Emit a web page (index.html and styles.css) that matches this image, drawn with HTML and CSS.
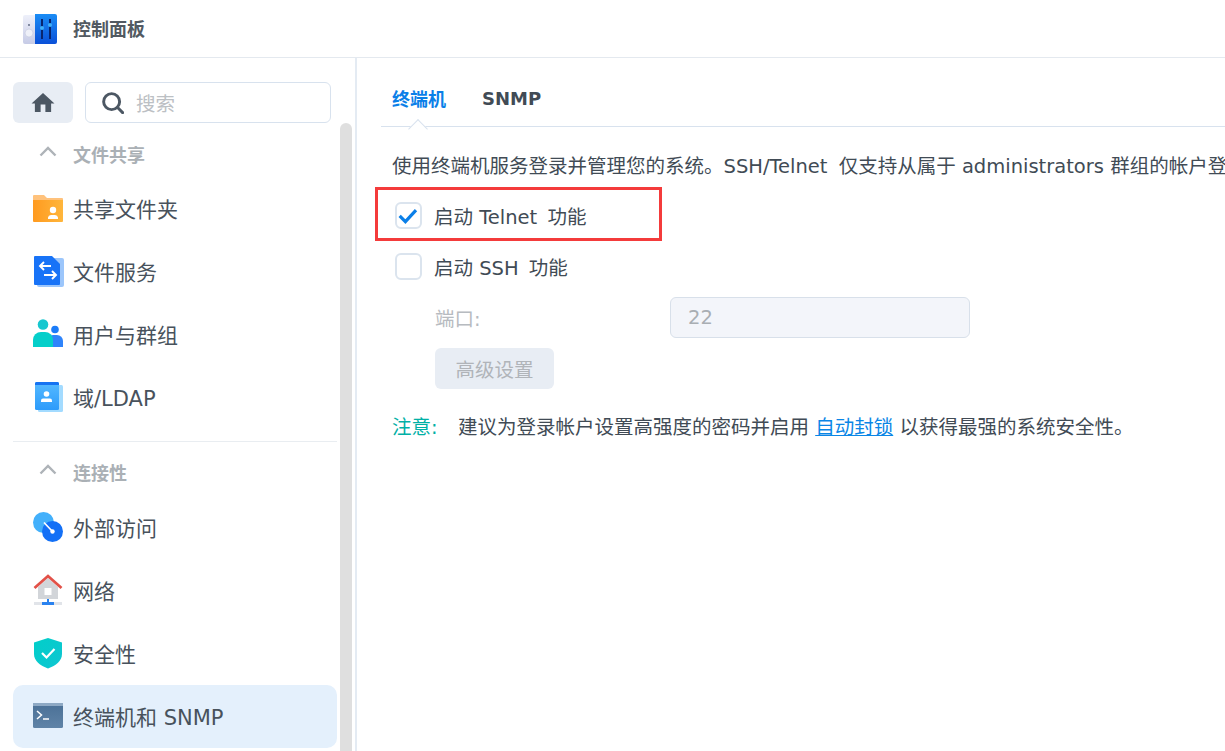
FILE: index.html
```html
<!DOCTYPE html>
<html lang="zh-CN">
<head>
<meta charset="utf-8">
<title>控制面板</title>
<link rel="stylesheet" href="styles.css">
</head>
<body>
<div class="window">
  <header class="titlebar">
    <svg class="app-icon" viewBox="0 0 34 32" aria-hidden="true">
      <defs>
        <linearGradient id="appL" x1="0" y1="0" x2="0" y2="1"><stop offset="0" stop-color="#eef0fa"/><stop offset="1" stop-color="#c6cbe6"/></linearGradient>
        <linearGradient id="appR" x1="0" y1="0" x2="0" y2="1"><stop offset="0" stop-color="#1a8cf5"/><stop offset="1" stop-color="#0a50d8"/></linearGradient>
      </defs>
      <rect x="0" y="2" width="14" height="29" rx="2" fill="url(#appL)"/>
      <circle cx="6" cy="12" r=".9" fill="#55607a"/>
      <circle cx="6" cy="20" r="4" fill="#eef0f8" stroke="#c3c8de" stroke-width=".6"/>
      <path d="M12 1h20a2 2 0 0 1 2 2v26a2 2 0 0 1-2 2H12z" fill="url(#appR)"/>
      <path d="M19 6v20M27 6v20" stroke="#08256e" stroke-width="2"/>
      <circle cx="19" cy="15" r="2" fill="#3fb0f8"/>
      <circle cx="27" cy="12" r="2" fill="#3fb0f8"/>
    </svg>
    <span class="app-title">控制面板</span>
  </header>
  <div class="main">
    <aside class="sidebar">
      <div class="search-row">
        <button class="home-btn" type="button" aria-label="主页">
          <svg viewBox="0 0 24 22" class="home-icon" aria-hidden="true"><path d="M12 1 0 12h3.500v9h17v-9H24zM9.500 13h5v8h-5z" fill="#4c5763" fill-rule="evenodd"/></svg>
        </button>
        <div class="search-box">
          <svg viewBox="0 0 24 24" class="search-icon" aria-hidden="true"><circle cx="10.500" cy="10.500" r="8.700" fill="none" stroke="#4c5763" stroke-width="3.200"/><path d="m17 17 5.500 5.500" stroke="#4c5763" stroke-width="3.200" stroke-linecap="round"/></svg>
          <span class="search-text">搜索</span>
        </div>
      </div>
      <div class="nav-wrap">
        <nav class="nav">
          <div class="nav-head"><svg viewBox="0 0 18 11" class="chev" aria-hidden="true"><path d="m1.500 9.500 7.500-7.500 7.500 7.500" fill="none" stroke="#aeb3b8" stroke-width="2.400"/></svg><span>文件共享</span></div>
          <div class="nav-item">
            <svg class="nav-icon" viewBox="0 0 32 32" aria-hidden="true"><defs><linearGradient id="fold" x1="0" y1="0" x2="1" y2="0"><stop offset="0" stop-color="#ff9a1f"/><stop offset="1" stop-color="#ffb63c"/></linearGradient></defs><path d="M1 4a1 1 0 0 1 1-1h10l3 3h15a1 1 0 0 1 1 1v5H1z" fill="#ffc27c"/><path d="M1 8h30v21a1 1 0 0 1-1 1H2a1 1 0 0 1-1-1z" fill="url(#fold)"/><circle cx="21" cy="18" r="3.200" fill="#fff"/><path d="M16 27v-1.500a3 3 0 0 1 3-2.500h4a3 3 0 0 1 3 2.500V27z" fill="#fff"/></svg>
            <span>共享文件夹</span>
          </div>
          <div class="nav-item">
            <svg class="nav-icon" viewBox="0 0 32 32" aria-hidden="true"><rect x="5" y="3" width="27" height="29" rx="2" fill="#9cc6fb"/><path d="M3 1h17l8 8v20a1 1 0 0 1-1 1H3a1 1 0 0 1-1-1V2a1 1 0 0 1 1-1z" fill="#1873f7"/><path d="M19 11H8m4-4-4 4 4 4M12 20h12m-4-4 4 4-4 4" fill="none" stroke="#fff" stroke-width="1.900"/></svg>
            <span>文件服务</span>
          </div>
          <div class="nav-item">
            <svg class="nav-icon" viewBox="0 0 32 32" aria-hidden="true"><circle cx="23" cy="11.500" r="3.800" fill="#1b7cf9"/><path d="M15 29v-6a6 6 0 0 1 6-6h4a6 6 0 0 1 6 6v6z" fill="#2f84fb"/><circle cx="11" cy="6.500" r="5.300" fill="#17c7cf"/><path d="M1 29v-7a8 8 0 0 1 8-8h4a8 8 0 0 1 8 8v7z" fill="#05cfca"/></svg>
            <span>用户与群组</span>
          </div>
          <div class="nav-item">
            <svg class="nav-icon" viewBox="0 0 32 32" aria-hidden="true"><defs><linearGradient id="dom" x1="0" y1="0" x2="0" y2="1"><stop offset="0" stop-color="#56baff"/><stop offset="1" stop-color="#2c9bfb"/></linearGradient></defs><rect x="6" y="4" width="25" height="27" rx="1.500" fill="#a3dbff"/><rect x="3" y="1" width="24" height="28" rx="1.500" fill="url(#dom)"/><path d="M3 4V2.500A1.500 1.500 0 0 1 4.500 1h21A1.500 1.500 0 0 1 27 2.500V4z" fill="#1673f2"/><circle cx="14.500" cy="13" r="2.800" fill="#fff"/><path d="M9 21v-1.500a2 2 0 0 1 2-2h7a2 2 0 0 1 2 2V21z" fill="#fff"/></svg>
            <span>域/LDAP</span>
          </div>
          <div class="nav-sep"></div>
          <div class="nav-head nav-head-2"><svg viewBox="0 0 18 11" class="chev" aria-hidden="true"><path d="m1.500 9.500 7.500-7.500 7.500 7.500" fill="none" stroke="#aeb3b8" stroke-width="2.400"/></svg><span>连接性</span></div>
          <div class="nav-item">
            <svg class="nav-icon" viewBox="0 0 32 32" aria-hidden="true"><circle cx="11.500" cy="11.500" r="10.500" fill="#43b0fb"/><circle cx="20.500" cy="20.500" r="10.500" fill="#1370f6"/><path d="M12 11.500 20.500 20.500" stroke="#fff" stroke-width="1.700"/><circle cx="20.500" cy="20.500" r="2.200" fill="#fff"/></svg>
            <span>外部访问</span>
          </div>
          <div class="nav-item">
            <svg class="nav-icon" viewBox="0 0 32 32" aria-hidden="true"><path d="M6 13 16 4l10 9v12H6z" fill="#d2d5d9"/><path d="M2.500 14 16 2l13.500 12" fill="none" stroke="#e25148" stroke-width="2.800"/><rect x="12.500" y="14" width="7" height="7" fill="#fff"/><rect x="2" y="28" width="28" height="3" fill="#e1e4e9"/><rect x="15" y="25" width="2" height="4" fill="#2a82ef"/><rect x="10" y="28" width="12" height="3" fill="#2a82ef"/></svg>
            <span>网络</span>
          </div>
          <div class="nav-item">
            <svg class="nav-icon" viewBox="0 0 32 32" aria-hidden="true"><defs><linearGradient id="sh" x1="0" y1="0" x2="1" y2="1"><stop offset="0" stop-color="#00cfc9"/><stop offset="1" stop-color="#10c5d2"/></linearGradient></defs><path d="M16 1 30 5.500V17c0 7-6 11.500-14 14.500C8 28.500 2 24 2 17V5.500z" fill="url(#sh)"/><path d="m10 16 4.500 4.500L22.500 12" fill="none" stroke="#fff" stroke-width="2.200"/></svg>
            <span>安全性</span>
          </div>
          <div class="nav-item is-active">
            <svg class="nav-icon" viewBox="0 0 32 32" aria-hidden="true"><defs><linearGradient id="term" x1="0" y1="0" x2="0" y2="1"><stop offset="0" stop-color="#4a7096"/><stop offset="1" stop-color="#5f83a7"/></linearGradient></defs><rect x="1" y="3" width="30" height="25" rx="1.500" fill="url(#term)"/><rect x="1" y="3" width="30" height="3" fill="#8ea9c4"/><path d="m5 11 4.500 4L5 19" fill="none" stroke="#fff" stroke-width="1.500"/><path d="M11 19h6" stroke="#fff" stroke-width="1.500"/></svg>
            <span>终端机和 SNMP</span>
          </div>
        </nav>
        <div class="scroll-thumb"></div>
      </div>
    </aside>
    <section class="content">
      <div class="tabs">
        <span class="tab is-current">终端机</span>
        <span class="tab">SNMP</span>
      </div>
      <div class="panel">
        <p class="desc">使用终端机服务登录并管理您的系统。SSH/Telnet <span class="gap-l">仅支持从属于</span> administrators 群组的帐户登</p>
        <label class="check-row check-telnet">
          <span class="checkbox"><svg viewBox="0 0 26 26" class="tick" aria-hidden="true"><path d="m3 13.500 6.500 6.500L21.500 7" fill="none" stroke="#0a7fe8" stroke-width="3.600"/></svg></span>
          <span>启动 Telnet <span class="gap-s">功能</span></span>
        </label>
        <label class="check-row check-ssh">
          <span class="checkbox"></span>
          <span>启动 SSH <span class="gap-s">功能</span></span>
        </label>
        <div class="field">
          <span class="field-label">端口:</span>
          <div class="input">22</div>
        </div>
        <button class="adv-btn" type="button">高级设置</button>
        <p class="note"><span class="note-tag">注意:</span><span>建议为登录帐户设置高强度的密码并启用 <a class="link">自动封锁</a> 以获得最强的系统安全性。</span></p>
        <div class="highlight"></div>
      </div>
    </section>
  </div>
</div>
</body>
</html>
```
FILE: styles.css
```css
* { box-sizing: border-box; }
html, body { margin: 0; padding: 0; height: 100%; overflow: hidden; background: #fff; }
body {
  font-family: "DejaVu Sans", "Noto Sans CJK SC", sans-serif;
  color: #414b55;
}
.window { width: 1225px; height: 751px; display: flex; flex-direction: column; overflow: hidden; }

.titlebar {
  height: 58px; flex: none; display: flex; align-items: center;
  padding-left: 23px; border-bottom: 1px solid #e4e9ef;
}
.app-icon { width: 34px; height: 32px; margin-right: 16px; }
.app-title { font-size: 18px; font-weight: 700; color: #525a62; margin-bottom: 2px; }

.main { flex: 1; display: flex; min-height: 0; }

.sidebar {
  width: 357px; flex: none; border-right: 2px solid #e4ebf3;
  display: flex; flex-direction: column; padding-top: 24px; min-height: 0;
}
.search-row { display: flex; gap: 12px; padding-left: 13px; flex: none; width: 331px; }
.home-btn {
  width: 60px; height: 41px; border: 0; border-radius: 6px; background: #e8edf4;
  display: flex; align-items: center; justify-content: center; padding: 0;
}
.home-icon { width: 24px; height: 21px; }
.search-box {
  flex: 1; height: 41px; border: 1px solid #d8e2ee; border-radius: 6px;
  display: flex; align-items: center; padding-left: 16px;
}
.search-icon { width: 22px; height: 22px; margin-right: 12px; }
.search-text { font-size: 19.5px; color: #bcc0c4; }

.nav-wrap { flex: 1; position: relative; min-height: 0; overflow: hidden; }
.nav { width: 337px; padding-left: 13px; padding-top: 9px; }
.nav-head {
  height: 45px; display: flex; align-items: center; padding: 0 0 2px 26px;
  font-size: 18px; font-weight: 700; color: #aab0b5;
}
.nav-head-2 { margin: 8px 0 1px; }
.chev { width: 18px; height: 11px; margin-right: 16px; margin-top: -5px; }
.nav-item {
  height: 63px; display: flex; align-items: center; padding: 0 0 2px 19px;
  font-size: 21px; color: #48525c; border-radius: 10px; white-space: nowrap;
}
.nav-item.is-active { background: #e4f0fc; }
.nav-icon { width: 32px; height: 32px; margin-right: 9px; flex: none; }
.nav-sep { height: 1px; background: #e9edf1; margin-top: 12px; }
.scroll-thumb {
  position: absolute; left: 340px; top: 0; width: 12px; bottom: 0;
  background: #dfdfdf; border-radius: 6px 6px 0 0;
}

.content { flex: 1; min-width: 0; display: flex; flex-direction: column; padding-left: 24px; overflow: hidden; }
.tabs {
  height: 69px; flex: none; display: flex; gap: 36px; align-items: center;
  padding: 12px 0 0 11px; border-bottom: 1px solid #d8e2ee; position: relative;
  font-size: 18px; font-weight: 700; color: #414b55;
}
.tab.is-current { color: #0a7fe8; position: relative; }
.tab.is-current::after {
  content: ""; position: absolute; left: 19px; top: 37px; width: 13px; height: 13px;
  background: #fff; border: 1px solid #d8e2ee; border-width: 1px 0 0 1px; transform: rotate(45deg);
}
.panel { position: relative; padding-left: 11px; flex: 1; font-size: 19.5px; white-space: nowrap; }
.desc { margin: 27px 0 0; height: 26px; line-height: 26px; }
.gap-l { margin-left: 5px; }
.gap-s { margin-left: 4px; }
.check-row { display: flex; align-items: center; height: 28px; }
.check-telnet { margin-top: 21px; padding-left: 3px; }
.check-ssh { margin-top: 23px; padding-left: 3px; }
.checkbox {
  width: 27px; height: 27px; border: 2px solid #dbe4ee; border-radius: 6px; background: #fff;
  flex: none; margin-right: 12px; display: block;
}
.tick { display: block; width: 23px; height: 23px; }
.field { display: flex; align-items: center; height: 41px; margin-top: 17px; padding-left: 43px; }
.field-label { width: 235px; color: #b7bbc0; }
.input {
  width: 300px; height: 41px; background: #f3f5fa; border: 1px solid #d8e0ea; border-radius: 6px;
  padding-left: 17px; line-height: 39px; color: #a9aeb3;
}
.adv-btn {
  display: block; width: 119px; height: 41px; margin: 10px 0 0 43px; border: 0; border-radius: 6px;
  background: #e8edf4; color: #b0b4b9; font: inherit; padding: 0;
}
.note { margin: 25px 0 0; height: 28px; line-height: 28px; display: flex; }
.note-tag { width: 66px; color: #00b0a6; flex: none; }
.link { color: #0a86e6; text-decoration: underline; }
.highlight {
  position: absolute; left: -6px; top: 60px; width: 287px; height: 54px;
  border: 3px solid #f43b3b; pointer-events: none;
}
```
